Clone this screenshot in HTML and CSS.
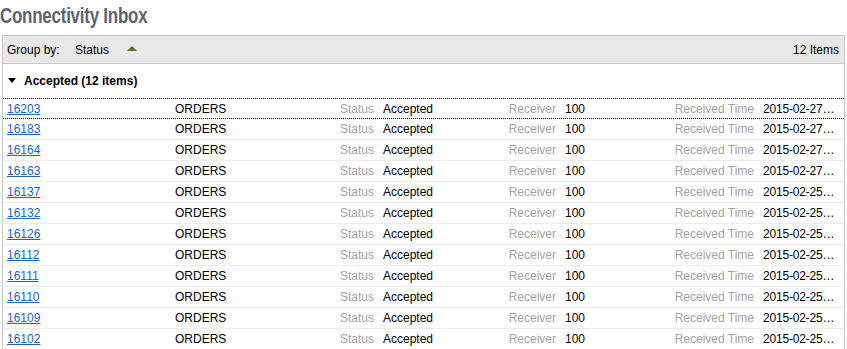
FILE: index.html
```html
<!DOCTYPE html>
<html lang="en">
<head>
  <meta charset="UTF-8">
  <title>Connectivity Inbox</title>
  <link rel="stylesheet" href="styles.css">
</head>
<body>
  <h1 class="title"><span class="title-text">Connectivity Inbox</span></h1>

  <div class="panel">
    <div class="toolbar">
      <span class="group-label">Group by:</span>
      <span class="group-field">Status</span>
      <span class="sort-up"></span>
      <span class="count">12 Items</span>
    </div>

    <div class="group-head"><span class="caret"></span>Accepted (12 items)</div>

    <div class="rows" id="rows"></div>
  </div>

  <script>
    var items = [
      ["16203", "2015-02-27"], ["16183", "2015-02-27"], ["16164", "2015-02-27"],
      ["16163", "2015-02-27"], ["16137", "2015-02-25"], ["16132", "2015-02-25"],
      ["16126", "2015-02-25"], ["16112", "2015-02-25"], ["16111", "2015-02-25"],
      ["16110", "2015-02-25"], ["16109", "2015-02-25"], ["16102", "2015-02-25"]
    ];
    var html = "";
    items.forEach(function (it, i) {
      html += '<div class="row' + (i === 0 ? ' focused' : '') + '">' +
        '<span class="id"><a href="#">' + it[0] + '</a></span>' +
        '<span class="type">ORDERS</span>' +
        '<span class="lbl">Status</span><span class="val">Accepted</span>' +
        '<span class="lbl">Receiver</span><span class="val">100</span>' +
        '<span class="lbl">Received Time</span><span class="val time">' + it[1] + '…</span>' +
        '</div>';
    });
    document.getElementById("rows").innerHTML = html;
  </script>
</body>
</html>
```

FILE: styles.css
```css
body {
  margin: 0;
  font-family: "Liberation Sans", Arial, sans-serif;
  font-size: 12px;
  color: #000;
  background: #fff;
}

.title {
  margin: 0;
  height: 35px;
  padding: 3px 0 0 0;
  box-sizing: border-box;
  font-size: 22px;
  font-weight: bold;
  color: #5d6370;
  letter-spacing: -0.3px;
}
/* no condensed face installed, so squeeze the bold one */
.title-text {
  display: inline-block;
  transform: scaleX(0.77);
  transform-origin: left center;
}

.panel {
  margin-left: 2px;
  width: 843px;
  box-sizing: border-box;
  border: 1px solid #c8c8c8;
  border-bottom: none;
  height: 314px;
  overflow: hidden;
}

.toolbar {
  display: flex;
  align-items: center;
  height: 27px;
  padding: 0 5px 0 4px;
  background: #e8e8e8;
  border-bottom: 1px solid #c8c8c8;
}
.group-label { width: 68px; }
.group-field { width: 52px; }
.sort-up {
  width: 0;
  height: 0;
  border-left: 5px solid transparent;
  border-right: 5px solid transparent;
  border-bottom: 5px solid #4f7a12;
  margin-top: -3px;
}
.count { margin-left: auto; }

.group-head {
  display: flex;
  align-items: center;
  height: 34px;
  padding-left: 5px;
  font-weight: bold;
}
.caret {
  width: 0;
  height: 0;
  border-left: 4px solid transparent;
  border-right: 4px solid transparent;
  border-top: 5px solid #000;
  margin-right: 8px;
  margin-top: -2px;
}

.row {
  display: grid;
  grid-template-columns: 168px 120px 88px 97px 85px 75px 123px 76px;
  align-items: center;
  height: 21px;
  padding-left: 4px;
  border-bottom: 1px solid #ececec;
  box-sizing: border-box;
}
.row.focused {
  border-top: 1px dotted #000;
  border-bottom: 1px dotted #000;
}
.row a { color: #1565c9; }
.lbl {
  text-align: right;
  padding-right: 9px;
  color: #a4a4a4;
}
.val,
.type { white-space: nowrap; }
.time { letter-spacing: -0.2px; }
```
